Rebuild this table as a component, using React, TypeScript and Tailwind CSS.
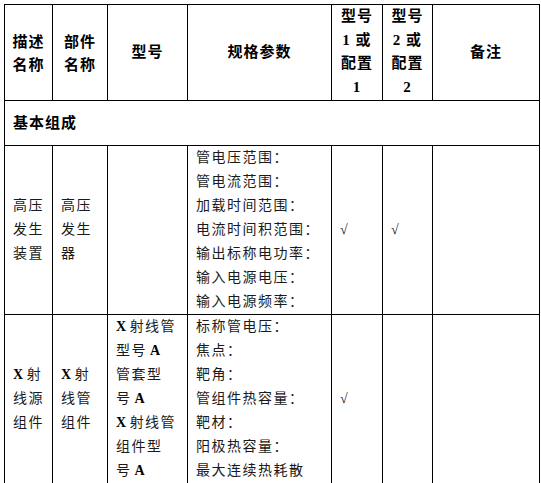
const cell = "border border-black align-middle";
const body = "px-[8px] text-left text-[14px] leading-[24px] tracking-[1.5px] text-[#1a1a1a]";
const head = "text-center text-[15px] leading-[23.7px] tracking-[1px] font-bold text-black";

function X() {
  return <span className="font-bold text-black pr-[2px]">X</span>;
}

function A() {
  return <span className="font-bold text-black pl-[3px]">A</span>;
}

const specs1 = [
  "管电压范围：",
  "管电流范围：",
  "加载时间范围：",
  "电流时间积范围：",
  "输出标称电功率：",
  "输入电源电压：",
  "输入电源频率：",
];

const specs2 = [
  "标称管电压：",
  "焦点：",
  "靶角：",
  "管组件热容量：",
  "靶材：",
  "阳极热容量：",
  "最大连续热耗散",
];

export default function App() {
  return (
    <div
      className="w-[541px] h-[483px] bg-white pl-[4px] pt-[4px] overflow-hidden"
      style={{ fontFamily: "'Liberation Serif', 'Noto Sans CJK SC', serif" }}
    >
      <table className="table-fixed border-collapse w-[535px]">
        <colgroup>
          <col className="w-[48px]" />
          <col className="w-[55px]" />
          <col className="w-[80px]" />
          <col className="w-[144px]" />
          <col className="w-[51px]" />
          <col className="w-[50px]" />
          <col className="w-[107px]" />
        </colgroup>
        <tbody>
          <tr className="h-[95px]">
            <td className={`${cell} ${head} pt-[4px]`}>描述<br />名称</td>
            <td className={`${cell} ${head} pt-[4px]`}>部件<br />名称</td>
            <td className={`${cell} ${head}`}>型号</td>
            <td className={`${cell} ${head}`}>规格参数</td>
            <td className={`${cell} ${head}`}>型号<br />1 或<br />配置<br />1</td>
            <td className={`${cell} ${head}`}>型号<br />2 或<br />配置<br />2</td>
            <td className={`${cell} ${head}`}>备注</td>
          </tr>
          <tr className="h-[45px]">
            <td colSpan={7} className={`${cell} px-[8px] text-left text-[15px] tracking-[1px] font-bold text-black`}>
              基本组成
            </td>
          </tr>
          <tr className="h-[168px]">
            <td className={`${cell} ${body}`}>高压<br />发生<br />装置</td>
            <td className={`${cell} ${body}`}>高压<br />发生<br />器</td>
            <td className={`${cell} ${body}`}></td>
            <td className={`${cell} ${body}`}>
              {specs1.map((s) => (
                <div key={s}>{s}</div>
              ))}
            </td>
            <td className={`${cell} ${body}`}>√</td>
            <td className={`${cell} ${body}`}>√</td>
            <td className={`${cell} ${body}`}></td>
          </tr>
          <tr className="h-[167px]">
            <td className={`${cell} ${body}`}><X />射<br />线源<br />组件</td>
            <td className={`${cell} ${body}`}><X />射<br />线管<br />组件</td>
            <td className={`${cell} ${body}`}>
              <X />射线管<br />型号<A /><br />管套型<br />号<A /><br /><X />射线管<br />组件型<br />号<A />
            </td>
            <td className={`${cell} ${body}`}>
              {specs2.map((s) => (
                <div key={s}>{s}</div>
              ))}
            </td>
            <td className={`${cell} ${body}`}>√</td>
            <td className={`${cell} ${body}`}></td>
            <td className={`${cell} ${body}`}></td>
          </tr>
        </tbody>
      </table>
    </div>
  );
}
